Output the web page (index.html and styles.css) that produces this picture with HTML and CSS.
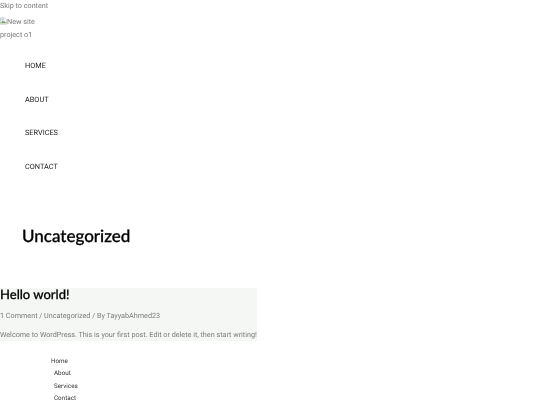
FILE: index.html
```html
<!DOCTYPE html>
<html lang="en">
<head>
    <meta charset="UTF-8">
    <meta name="viewport" content="width=device-width, initial-scale=1.0">
    <title>Uncategorized</title>
    <link rel="stylesheet" href="styles.css">
</head>
<body>
    <a class="skip-link" href="#content">Skip to content</a>
    <header class="site-header">
        <a class="logo" href="#">
            <svg class="broken-img" width="7" height="8" viewBox="0 0 9 9">
                <path d="M0.5 0.5H6L8.5 3V8.5H0.5Z" fill="#fff" stroke="#a9a9a9" stroke-width="0.8"/>
                <path d="M1.5 6.5L3.5 4L5 5.5L6 4.5L7.5 6.5V7.5H1.5Z" fill="#6fa85c"/>
                <rect x="1.5" y="1.5" width="4" height="2.5" fill="#b9d4f5"/>
            </svg>New site project o1
        </a>
        <ul class="main-menu">
            <li><a href="#">HOME</a></li>
            <li><a href="#">ABOUT</a></li>
            <li><a href="#">SERVICES</a></li>
            <li><a href="#">CONTACT</a></li>
        </ul>
    </header>
    <main id="content">
        <h1 class="archive-title">Uncategorized</h1>
        <article class="post">
            <h2 class="post-title">Hello world!</h2>
            <p class="post-meta">1 Comment / Uncategorized / By TayyabAhmed23</p>
            <p class="post-excerpt">Welcome to WordPress. This is your first post. Edit or delete it, then start writing!</p>
        </article>
    </main>
    <footer class="site-footer">
        <ul class="footer-menu">
            <li class="current"><a href="#">Home</a></li>
            <li><a href="#">About</a></li>
            <li><a href="#">Services</a></li>
            <li><a href="#">Contact</a></li>
        </ul>
    </footer>
</body>
</html>
```

FILE: styles.css
```css
html {
    background-color: #fff;
}
body {
    font-family: Roboto, "Liberation Sans", sans-serif;
    font-size: 7.23px;
    color: #7a7a7a;
    text-rendering: geometricPrecision;
    will-change: transform;
    margin: 0;
    overflow: hidden;
    height: 405px;
}
a {
    color: inherit;
    text-decoration: none;
}
ul {
    list-style: none;
    margin: 0;
    padding: 0;
}
.skip-link {
    display: block;
    line-height: 12px;
}
.site-header {
    padding-top: 4px;
}
.logo {
    display: block;
    width: 38px;
    line-height: 12.5px;
}
.broken-img {
    vertical-align: -1px;
}
.main-menu {
    padding-left: 25px;
    padding-top: 8px;
}
.main-menu li {
    height: 33.7px;
    line-height: 33.7px;
    font-size: 7.35px;
    color: #222;
}
.archive-title {
    font-family: Lato, sans-serif;
    font-size: 17px;
    font-weight: 500;
    -webkit-text-stroke: 0.3px #000;
    color: #000;
    line-height: 24px;
    margin: 40px 0 0 22px;
}
.post {
    width: 257px;
    margin-top: 40px;
    background-color: #f5f7f5;
}
.post-title {
    font-family: Lato, sans-serif;
    font-size: 13px;
    font-weight: 500;
    -webkit-text-stroke: 0.25px #000;
    color: #000;
    line-height: 13px;
    margin: 0;
}
.post-meta,
.post-excerpt {
    margin: 0;
    line-height: 12px;
}
.post-meta {
    padding-top: 9px;
}
.post-excerpt {
    padding-top: 7px;
    padding-bottom: 0;
    white-space: nowrap;
}
.site-footer {
    padding-top: 14.5px;
    padding-left: 51px;
    font-size: 6.3px;
    color: #333;
}
.footer-menu li {
    line-height: 12.2px;
    padding-left: 3px;
}
.footer-menu li.current {
    padding-left: 0;
}
```
